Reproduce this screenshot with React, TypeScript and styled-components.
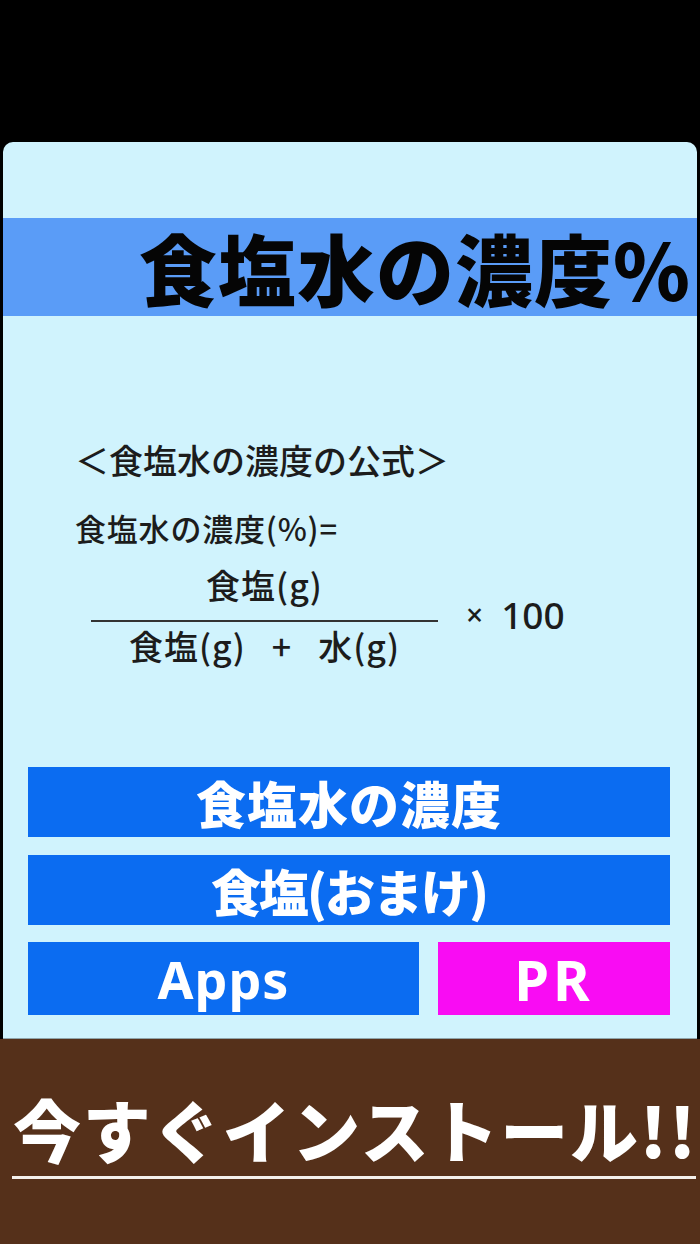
import styled, { createGlobalStyle } from 'styled-components'

const GlobalStyle = createGlobalStyle`
  html, body {
    margin: 0;
    padding: 0;
    background: #000000;
  }
  body {
    font-family: "Noto Sans CJK JP", "Noto Sans", sans-serif;
  }
`

function App () {
  return (
    <Page>
      <GlobalStyle />
      <TopBar />

      <Card>
        <TitleBand>
          <Title>食塩水の濃度%</Title>
        </TitleBand>

        <Formula>
          <Heading>＜食塩水の濃度の公式＞</Heading>
          <FormulaLine>食塩水の濃度(%)=</FormulaLine>
          <FractionRow>
            <Fraction>
              <FracText>食塩(g)</FracText>
              <FracBar />
              <Denominator>
                <FracText>食塩(g)</FracText>
                <FracText>+</FracText>
                <FracText>水(g)</FracText>
              </Denominator>
            </Fraction>
            <Times>
              <TimesSign>×</TimesSign>
              100
            </Times>
          </FractionRow>
        </Formula>

        <Menu>
          <MenuButton $height={70}>食塩水の濃度</MenuButton>
          <MenuButton $height={70} $tight>食塩(おまけ)</MenuButton>
          <BottomRow>
            <MenuButton $height={73} $latin>Apps</MenuButton>
            <MenuButton $height={73} $latin $pink>PR</MenuButton>
          </BottomRow>
        </Menu>
      </Card>

      <Banner>
        <InstallText>今すぐインストール!!</InstallText>
        <Underline />
      </Banner>
    </Page>
  )
}

const Page = styled.div`
  width: 700px;
  height: 1244px;
  display: flex;
  flex-direction: column;
  background: #000000;
  overflow: hidden;
`

const TopBar = styled.div`
  height: 142px;
  flex-shrink: 0;
  background: #000000;
`

const Card = styled.div`
  margin: 0 3px;
  height: 897px;
  flex-shrink: 0;
  box-sizing: border-box;
  padding-top: 76px;
  background: #d0f3fd;
  border-radius: 10px 10px 0 0;
  border-bottom: 1px solid #8fa4aa;
  display: flex;
  flex-direction: column;
`

const TitleBand = styled.div`
  height: 98px;
  background: #5a9cf7;
  display: flex;
  align-items: center;
  padding-left: 136px;
`

const Title = styled.h1`
  margin: 0;
  font-family: "Noto Sans CJK JP", sans-serif;
  font-weight: 900;
  font-size: 78px;
  line-height: 98px;
  letter-spacing: 1px;
  color: #050505;
  white-space: nowrap;
`

const Formula = styled.div`
  margin-top: 124px;
  padding-left: 72px;
  color: #1c1c1c;
  font-family: "Noto Sans CJK JP", sans-serif;
  font-weight: 500;
`

const Heading = styled.div`
  font-size: 34px;
  line-height: 40px;
  white-space: nowrap;
`

const FormulaLine = styled.div`
  margin-top: 28px;
  font-size: 31px;
  line-height: 40px;
  letter-spacing: 0.8px;
  white-space: nowrap;
`

const FractionRow = styled.div`
  margin-top: 17px;
  display: flex;
  align-items: center;
  gap: 28px;
`

const Fraction = styled.div`
  margin-left: 16px;
  width: 347px;
  display: flex;
  flex-direction: column;
  align-items: center;
`

const Denominator = styled.div`
  display: flex;
  gap: 26px;
`

const FracText = styled.div`
  font-size: 34px;
  line-height: 40px;
  letter-spacing: 1px;
  white-space: nowrap;
`

const FracBar = styled.div`
  align-self: stretch;
  height: 2px;
  margin: 15px 0 4px;
  background: #333333;
`

const Times = styled.div`
  display: flex;
  align-items: center;
  gap: 18px;
  font-family: "Noto Sans", sans-serif;
  font-size: 37px;
  font-weight: 500;
  line-height: 40px;
  margin-top: -2px;
  white-space: nowrap;
`

const TimesSign = styled.span`
  font-size: 30px;
`

const Menu = styled.div`
  margin-top: 101px;
  padding: 0 27px 0 25px;
  display: flex;
  flex-direction: column;
  gap: 18px;
`

const BottomRow = styled.div`
  display: grid;
  grid-template-columns: 391px 1fr;
  gap: 19px;
  margin-top: -1px;
`

const MenuButton = styled.div<{ $height: number, $latin?: boolean, $pink?: boolean, $tight?: boolean }>`
  height: ${p => p.$height}px;
  background: ${p => p.$pink ? '#f90cf3' : '#0b6cf1'};
  color: #ffffff;
  display: flex;
  align-items: center;
  justify-content: center;
  font-family: ${p => p.$latin ? '"Noto Sans", sans-serif' : '"Noto Sans CJK JP", sans-serif'};
  font-weight: ${p => p.$latin ? 700 : 900};
  font-size: ${p => p.$pink ? '56px' : p.$latin ? '52px' : '50px'};
  letter-spacing: ${p => p.$pink ? '4px' : p.$tight ? '-2px' : '1px'};
  white-space: nowrap;
`

const Banner = styled.div`
  flex: 1;
  background: #55301a;
  padding-top: 50px;
  display: flex;
  flex-direction: column;
`

const InstallText = styled.div`
  padding-left: 13px;
  font-family: "Noto Sans CJK JP", sans-serif;
  font-weight: 900;
  font-size: 68px;
  line-height: 80px;
  letter-spacing: 1.8px;
  color: #ffffff;
  white-space: nowrap;
`

const Underline = styled.div`
  margin: 7px 4px 0 12px;
  height: 3px;
  background: #f4f0ec;
`

export default App
